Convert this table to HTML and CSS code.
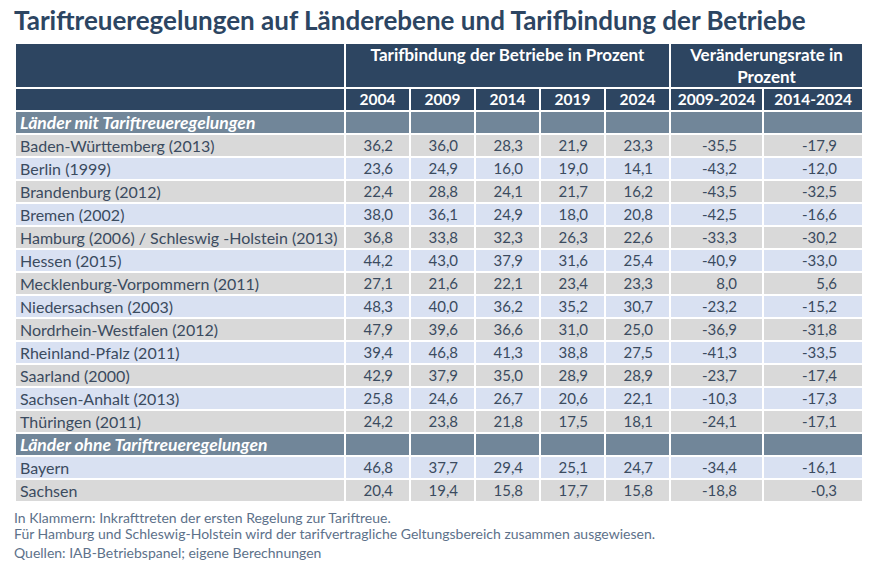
FILE: index.html
```html
<!DOCTYPE html>
<html lang="de">
<head>
<meta charset="utf-8">
<title>Tariftreueregelungen</title>
<link rel="stylesheet" href="styles.css">
</head>
<body>
<div class="page">
  <h1 class="title">Tariftreueregelungen auf Länderebene und Tarifbindung der Betriebe</h1>
  <table class="tbl">
    <colgroup>
      <col class="c-label"><col class="c-year"><col class="c-year"><col class="c-year"><col class="c-year"><col class="c-year"><col class="c-rate1"><col class="c-rate2">
    </colgroup>
    <thead>
      <tr class="h1">
        <th></th>
        <th colspan="5">Tarifbindung der Betriebe in Prozent</th>
        <th colspan="2" class="wrap">Veränderungsrate in Prozent</th>
      </tr>
      <tr class="h2">
        <th></th><th>2004</th><th>2009</th><th>2014</th><th>2019</th><th>2024</th><th>2009-2024</th><th>2014-2024</th>
      </tr>
    </thead>
    <tbody>
      <tr class="sec"><td>Länder mit Tariftreueregelungen</td><td></td><td></td><td></td><td></td><td></td><td></td><td></td></tr>
      <tr class="g"><td>Baden-Württemberg (2013)</td><td>36,2</td><td>36,0</td><td>28,3</td><td>21,9</td><td>23,3</td><td>-35,5</td><td>-17,9</td></tr>
      <tr class="b"><td>Berlin (1999)</td><td>23,6</td><td>24,9</td><td>16,0</td><td>19,0</td><td>14,1</td><td>-43,2</td><td>-12,0</td></tr>
      <tr class="g"><td>Brandenburg (2012)</td><td>22,4</td><td>28,8</td><td>24,1</td><td>21,7</td><td>16,2</td><td>-43,5</td><td>-32,5</td></tr>
      <tr class="b"><td>Bremen (2002)</td><td>38,0</td><td>36,1</td><td>24,9</td><td>18,0</td><td>20,8</td><td>-42,5</td><td>-16,6</td></tr>
      <tr class="g"><td>Hamburg (2006) / Schleswig -Holstein (2013)</td><td>36,8</td><td>33,8</td><td>32,3</td><td>26,3</td><td>22,6</td><td>-33,3</td><td>-30,2</td></tr>
      <tr class="b"><td>Hessen (2015)</td><td>44,2</td><td>43,0</td><td>37,9</td><td>31,6</td><td>25,4</td><td>-40,9</td><td>-33,0</td></tr>
      <tr class="g"><td>Mecklenburg-Vorpommern (2011)</td><td>27,1</td><td>21,6</td><td>22,1</td><td>23,4</td><td>23,3</td><td>8,0</td><td>5,6</td></tr>
      <tr class="b"><td>Niedersachsen (2003)</td><td>48,3</td><td>40,0</td><td>36,2</td><td>35,2</td><td>30,7</td><td>-23,2</td><td>-15,2</td></tr>
      <tr class="g"><td>Nordrhein-Westfalen (2012)</td><td>47,9</td><td>39,6</td><td>36,6</td><td>31,0</td><td>25,0</td><td>-36,9</td><td>-31,8</td></tr>
      <tr class="b"><td>Rheinland-Pfalz (2011)</td><td>39,4</td><td>46,8</td><td>41,3</td><td>38,8</td><td>27,5</td><td>-41,3</td><td>-33,5</td></tr>
      <tr class="g"><td>Saarland (2000)</td><td>42,9</td><td>37,9</td><td>35,0</td><td>28,9</td><td>28,9</td><td>-23,7</td><td>-17,4</td></tr>
      <tr class="b"><td>Sachsen-Anhalt (2013)</td><td>25,8</td><td>24,6</td><td>26,7</td><td>20,6</td><td>22,1</td><td>-10,3</td><td>-17,3</td></tr>
      <tr class="g"><td>Thüringen (2011)</td><td>24,2</td><td>23,8</td><td>21,8</td><td>17,5</td><td>18,1</td><td>-24,1</td><td>-17,1</td></tr>
      <tr class="sec"><td>Länder ohne Tariftreueregelungen</td><td></td><td></td><td></td><td></td><td></td><td></td><td></td></tr>
      <tr class="b"><td>Bayern</td><td>46,8</td><td>37,7</td><td>29,4</td><td>25,1</td><td>24,7</td><td>-34,4</td><td>-16,1</td></tr>
      <tr class="g"><td>Sachsen</td><td>20,4</td><td>19,4</td><td>15,8</td><td>17,7</td><td>15,8</td><td>-18,8</td><td>-0,3</td></tr>
    </tbody>
  </table>
  <div class="notes">
    <p class="note">In Klammern: Inkrafttreten der ersten Regelung zur Tariftreue.</p>
    <p class="note">Für Hamburg und Schleswig-Holstein wird der tarifvertragliche Geltungsbereich zusammen ausgewiesen.</p>
    <p class="note src">Quellen: IAB-Betriebspanel; eigene Berechnungen</p>
  </div>
</div>
</body>
</html>
```
FILE: styles.css
```css
html, body {
  margin: 0;
  padding: 0;
  background: #ffffff;
}
body {
  font-family: Lato, "Liberation Sans", sans-serif;
  color: #3b4b5f;
}
.page {
  width: 890px;
  height: 566px;
  padding: 0 0 0 14px;
  box-sizing: border-box;
}
.title {
  margin: 0;
  padding-top: 3px;
  height: 42px;
  box-sizing: border-box;
  font-size: 26px;
  font-weight: 700;
  color: #2c4562;
  line-height: 34px;
  white-space: nowrap;
}
.tbl {
  border-collapse: collapse;
  table-layout: fixed;
  width: 848px;
  font-size: 15px;
}
.c-label { width: 330px; }
.c-year { width: 65px; }
.c-rate1 { width: 93px; }
.c-rate2 { width: 100px; }
.tbl th, .tbl td {
  border: 2px solid #ffffff;
  padding: 0;
  height: 21px;
  line-height: 21px;
  vertical-align: middle;
  overflow: hidden;
}
.tbl th {
  background: #2d4561;
  color: #ffffff;
  font-weight: 700;
  text-align: center;
}
.h1 th {
  height: 43px;
  vertical-align: top;
  line-height: 21.5px;
  font-size: 17px;
}
.h1 th.wrap {
  padding: 0 12px;
}
.h2 th {
  height: 21px;
  font-size: 15.5px;
}
.tbl td {
  text-align: right;
  padding-right: 16px;
}
.tbl td:first-child {
  text-align: left;
  padding: 0 0 0 4px;
  white-space: nowrap;
  font-size: 16px;
}
.tbl td:nth-child(7), .tbl td:nth-child(8) {
  padding-right: 25px;
}
.sec td {
  background: #718699;
  color: #ffffff;
  font-weight: 700;
  font-style: italic;
}
.sec td:first-child {
  font-size: 17.5px;
}
.g td { background: #d9d9d9; }
.b td { background: #d9e1f2; }
.notes {
  padding-top: 7px;
  color: #5d718a;
  font-size: 14px;
}
.note {
  margin: 0;
  line-height: 16px;
}
.note.src {
  margin-top: 3px;
}
```
